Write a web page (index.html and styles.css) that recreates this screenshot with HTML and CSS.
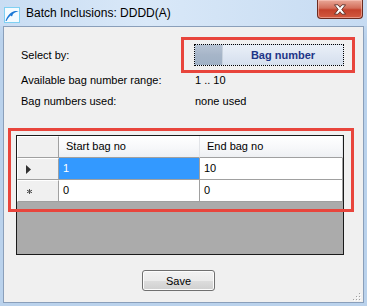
FILE: index.html
```html
<!DOCTYPE html>
<html>
  <head>
    <meta charset="utf-8"/>
    <link rel="stylesheet" href="styles.css">
  </head>
  <body>
    <div class="window">
      <div class="titlebar">
        <svg class="app-icon" width="16" height="16" viewBox="0 0 16 16">
          <rect x="0.5" y="0.5" width="15" height="15" fill="#f4fbff" stroke="#7fd0f2"/>
          <path d="M1.5 14 C3 9 6.5 5 11 4 C12.5 3.7 14 4 14.5 4.5 C12.5 4.6 10.5 5.5 9 7 L8 9.5 L6.5 8.5 C5 10 3.5 12 2.5 14 Z" fill="#1b78d6"/>
        </svg>
        <span class="title">Batch Inclusions: DDDD(A)</span>
        <div class="close-btn">
          <svg width="14" height="11" viewBox="0 0 14 11">
            <path d="M1.5 0.8 L5 0.8 L7 3.3 L9 0.8 L12.5 0.8 L8.8 5.5 L12.5 10.2 L9 10.2 L7 7.7 L5 10.2 L1.5 10.2 L5.2 5.5 Z" fill="#fff" stroke="#4a2018" stroke-width="0.8"/>
          </svg>
        </div>
      </div>

      <div class="client">
        <div class="form">
          <div class="label">Select by:</div>
          <div class="toggle">
            <span class="toggle-knob"></span>
            <span class="toggle-text">Bag number</span>
          </div>
          <div class="label">Available bag number range:</div>
          <div class="value">1 .. 10</div>
          <div class="label">Bag numbers used:</div>
          <div class="value">none used</div>
        </div>

        <div class="grid">
          <div class="grid-row grid-head">
            <div class="cell rowhead"></div>
            <div class="cell colhead">Start bag no</div>
            <div class="cell colhead">End bag no</div>
          </div>
          <div class="grid-row">
            <div class="cell rowhead">
              <svg width="5" height="9" viewBox="0 0 5 9"><path d="M0 0 L5 4.5 L0 9 Z" fill="#303030"/></svg>
            </div>
            <div class="cell selected">1</div>
            <div class="cell">10</div>
          </div>
          <div class="grid-row">
            <div class="cell rowhead new-row">
              <svg width="5" height="5" viewBox="0 0 5 5"><path d="M2.5 0 V5 M0 1.2 L5 3.8 M0 3.8 L5 1.2" stroke="#505050" stroke-width="1"/></svg>
            </div>
            <div class="cell">0</div>
            <div class="cell">0</div>
          </div>
        </div>

        <div class="actions">
          <button class="btn">Save</button>
        </div>

        <div class="mark mark-toggle"></div>
        <div class="mark mark-grid"></div>

        <svg class="grip" width="8" height="8" viewBox="0 0 8 8">
          <rect x="6" y="0" width="1" height="1" fill="#a0a0a0"/>
          <rect x="3" y="3" width="1" height="1" fill="#a0a0a0"/>
          <rect x="6" y="3" width="1" height="1" fill="#a0a0a0"/>
          <rect x="0" y="6" width="1" height="1" fill="#a0a0a0"/>
          <rect x="3" y="6" width="1" height="1" fill="#a0a0a0"/>
          <rect x="6" y="6" width="1" height="1" fill="#a0a0a0"/>
          <rect x="7" y="1" width="1" height="1" fill="#fff"/>
          <rect x="4" y="4" width="1" height="1" fill="#fff"/>
          <rect x="7" y="4" width="1" height="1" fill="#fff"/>
          <rect x="1" y="7" width="1" height="1" fill="#fff"/>
          <rect x="4" y="7" width="1" height="1" fill="#fff"/>
          <rect x="7" y="7" width="1" height="1" fill="#fff"/>
        </svg>
      </div>
    </div>
  </body>
</html>
```

FILE: styles.css
```css
html, body {
  margin: 0;
  padding: 0;
}
body {
  font-family: "Liberation Sans", Arial, sans-serif;
  font-size: 11px;
  color: #000;
}
.window {
  width: 367px;
  height: 306px;
  box-sizing: border-box;
  display: flex;
  flex-direction: column;
  background: linear-gradient(#cfe1f5, #bad2ec 40px, #bad2ec);
}
.titlebar {
  height: 26px;
  display: flex;
  align-items: flex-start;
  background: linear-gradient(90deg, #c9ddf3, #d9e8f8 40%, #c6dbf2);
}
.app-icon {
  margin: 7px 0 0 4px;
}
.title {
  margin: 6px 0 0 6px;
  font-size: 12px;
  line-height: 14px;
  flex: 1;
}
.close-btn {
  width: 44px;
  height: 18px;
  margin-right: 4px;
  border: 1px solid #6b2b20;
  border-top: 0;
  border-radius: 0 0 4px 4px;
  background: linear-gradient(#e9a898, #d36e5a 45%, #c4412b 55%, #d25a40);
  display: flex;
  align-items: center;
  justify-content: center;
  box-shadow: inset 0 0 0 1px rgba(255, 210, 200, 0.5);
}
.client {
  flex: 1;
  position: relative;
  margin: 0 3px 3px 3px;
  border: 1px solid #8a9fba;
  background: #f0f0f0;
}
.form {
  display: grid;
  grid-template-columns: 173px 150px;
  grid-template-rows: 22px 14px 14px;
  row-gap: 7px;
  margin: 17px 0 0 17px;
  align-items: center;
  line-height: 14px;
}
.value {
  padding-left: 1px;
}
.toggle {
  height: 22px;
  box-sizing: border-box;
  border: 1px dotted #000;
  display: flex;
  background: linear-gradient(#eaf0f8, #dfe7f3 50%, #d5dfed);
}
.toggle-knob {
  width: 27px;
  background: linear-gradient(#b7c4d4, #a6b5c8 50%, #9fb0c5);
  border-right: 1px solid #c8d2de;
}
.toggle-text {
  flex: 1;
  text-align: center;
  line-height: 20px;
  font-weight: bold;
  color: #1d3587;
}
.grid {
  width: 328px;
  height: 120px;
  box-sizing: border-box;
  margin: 27px 0 0 12px;
  border: 1px solid #1a1a1a;
  background: #ababab;
}
.grid-row {
  display: grid;
  grid-template-columns: 42px 141px 143px;
  height: 22px;
}
.cell {
  box-sizing: border-box;
  border-right: 1px solid #a0a0a0;
  border-bottom: 1px solid #a0a0a0;
  background: #fff;
  padding-left: 4px;
  line-height: 21px;
}
.grid-head .cell {
  background: linear-gradient(#ffffff, #f7f8fa 55%, #eef0f3);
  border-right-color: #e2e4e8;
  padding-left: 7px;
}
.grid-head .rowhead {
  border-right-color: #a0a0a0;
}
.rowhead {
  background: #f0f0f0;
  border-top: 1px solid #fff;
  padding-left: 8px;
  display: flex;
  align-items: center;
}
.grid-row .rowhead {
  background: #f0f0f0;
  border-left: 1px solid #fff;
}
.new-row {
  padding-left: 9px;
}
.selected {
  background: #3399ff;
  color: #fff;
}
.actions {
  margin: 15px 0 0 138px;
}
.btn {
  width: 73px;
  height: 21px;
  padding: 0;
  border: 1px solid #707070;
  border-radius: 3px;
  background: linear-gradient(#f2f2f2, #ebebeb 50%, #dddddd 51%, #cfcfcf);
  box-shadow: inset 0 0 0 1px #fcfcfc;
  font-family: "Liberation Sans", Arial, sans-serif;
  font-size: 11px;
  color: #000;
}
.mark {
  position: absolute;
  box-sizing: border-box;
  border: 3px solid #e8453c;
}
.mark-toggle {
  left: 177px;
  top: 10px;
  width: 174px;
  height: 36px;
}
.mark-grid {
  left: 4px;
  top: 101px;
  width: 346px;
  height: 84px;
}
.grip {
  position: absolute;
  right: 2px;
  bottom: 1px;
}
```
